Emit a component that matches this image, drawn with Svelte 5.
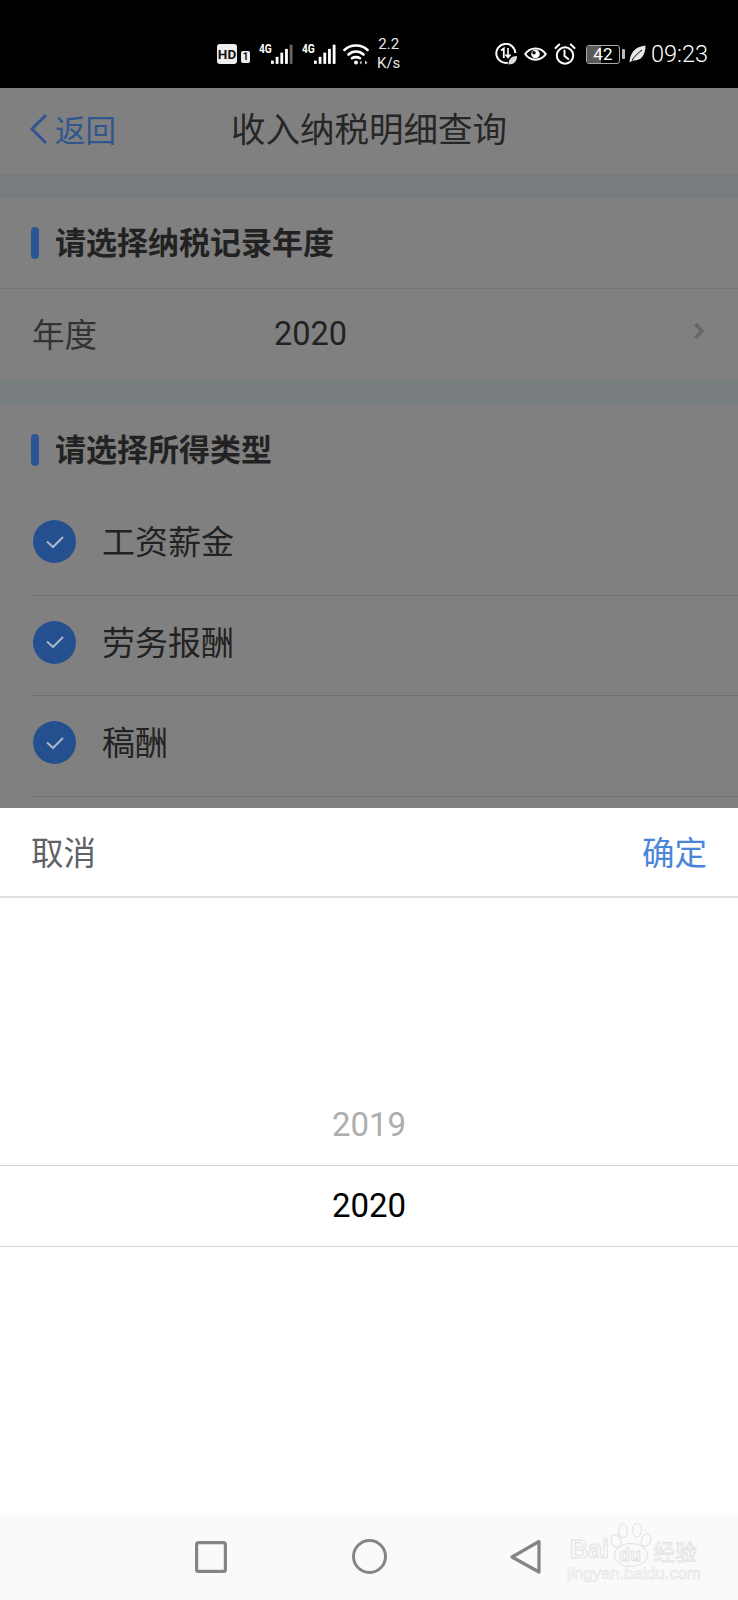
<script>
  const types = ['工资薪金', '劳务报酬', '稿酬'];
</script>

<div class="screen">
  <header class="status">
    <span class="hd">HD</span>
    <span class="sim">1</span>
    <span class="net">
      <span class="g4">4G</span>
      <svg width="22" height="21" viewBox="0 0 23.500 21"><g fill="#fff"><rect x="0" y="17" width="3" height="3.500"/><rect x="5" y="13" width="3" height="7.500"/><rect x="10" y="8.500" width="3" height="12"/><rect x="15" y="4.500" width="3" height="16"/></g><rect x="20" y="0" width="3" height="20.500" fill="#666"/></svg>
    </span>
    <span class="net">
      <span class="g4">4G</span>
      <svg width="22" height="21" viewBox="0 0 23.500 21"><g fill="#fff"><rect x="0" y="17" width="3" height="3.500"/><rect x="5" y="13" width="3" height="7.500"/><rect x="10" y="8.500" width="3" height="12"/><rect x="15" y="4.500" width="3" height="16"/><rect x="20" y="0" width="3" height="20.500"/></g></svg>
    </span>
    <svg class="wifi" width="26" height="22" viewBox="0 0 26 22" fill="none" stroke="#fff" stroke-width="2.600" stroke-linecap="round"><path d="M1.500 7C7.500 1 18.500 1 24.500 7"/><path d="M5.500 11.500C9.500 7.500 16.500 7.500 20.500 11.500"/><path d="M9 15.200C11 13.800 15 13.800 17 15.200"/><circle cx="13" cy="19.500" r="2" fill="#fff" stroke="none"/><path d="M18.500 17.500l-2 2.300 2 1.800zM22 17.500l2.500 2.300-2.500 1.800z" fill="#ddd" stroke="none"/></svg>
    <span class="speed"><span>2.2</span><span>K/s</span></span>

    <span class="right">
      <svg class="onecall" width="22" height="22" viewBox="0 0 22 22" fill="none" stroke="#fff" stroke-width="2"><path d="M13 19.600A9.500 9.500 0 1 1 20.300 10"/><path d="M6 7.500l2.800-2V15" stroke-width="1.800"/><path d="M13 5v9.500M10.500 11.500l2.500 3 2.500-3" stroke-width="1.600"/><path d="M13.500 21.500c0-5.500 3-8.500 8.500-8.500 0 5.500-3 8.500-8.500 8.500z" fill="#ddd" stroke="none"/></svg>
      <svg class="eye" width="23" height="18" viewBox="0 0 23 17" fill="none" stroke="#fff" stroke-width="2"><path d="M1.200 8.500C6 1 17 1 21.800 8.500C17 16 6 16 1.200 8.500z"/><circle cx="11.500" cy="8.500" r="4.300" fill="#fff" stroke="none"/><circle cx="10" cy="7.300" r="1.700" fill="#000" stroke="none"/></svg>
      <svg class="alarm" width="22" height="22" viewBox="0 0 22 22" fill="none" stroke="#fff" stroke-width="2"><circle cx="11" cy="12.500" r="8.200"/><path d="M10.500 7.500v5.500l3.800 3M1.500 5L5.200 1.500M20.500 5L16.800 1.500" stroke-linecap="round"/></svg>
      <span class="battery"><span class="level"></span><span class="pct">42</span></span>
      <span class="nub"></span>
      <svg class="leaf" width="17" height="18" viewBox="0 0 17 18"><path d="M.5 17.500C1 8 6 1.500 16.500.5C16.500 11 11 16.500 3.500 15.500C2.500 16 1.500 17 .5 17.500z" fill="#e8e8e8"/><path d="M3 15C6 11 9 8 13 5" stroke="#000" stroke-width="1" fill="none"/></svg>
      <span class="time">09:23</span>
    </span>
  </header>

  <div class="page">
    <nav class="topbar">
      <span class="back">
        <svg width="20" height="32" viewBox="0 0 20 32" fill="none" stroke="#31568f" stroke-width="3"><path d="M17 2L3 16l14 14"/></svg>
        <span>返回</span>
      </span>
      <h1>收入纳税明细查询</h1>
    </nav>
    <div class="band"></div>
    <section>
      <h2 class="head"><i></i>请选择纳税记录年度</h2>
      <div class="year">
        <span class="label">年度</span>
        <span class="value">2020</span>
        <svg class="more" width="12" height="18" viewBox="0 0 12 18" fill="none" stroke="#666" stroke-width="3.600"><path d="M2.500 2l6.500 7-6.500 7"/></svg>
      </div>
    </section>
    <div class="band second"></div>
    <section>
      <h2 class="head"><i></i>请选择所得类型</h2>
      {#each types as t}
        <div class="check">
          <span class="tick">
            <svg width="20" height="14" viewBox="0 0 20 14" fill="none" stroke="#a9b6c8" stroke-width="2"><path d="M2 6.500l6 5.500L18 2"/></svg>
          </span>
          <span class="txt">{t}</span>
        </div>
      {/each}
    </section>
  </div>

  <div class="sheet">
    <div class="actions">
      <span class="cancel">取消</span>
      <span class="ok">确定</span>
    </div>
    <div class="wheel">
      <div class="opt">2019</div>
      <div class="opt current">2020</div>
    </div>
  </div>

  <footer class="sysnav">
    <svg class="sq" width="32" height="32" viewBox="0 0 32 32" fill="none" stroke="#858585" stroke-width="3.200"><rect x="1.600" y="1.600" width="28.800" height="28.800" rx="2"/></svg>
    <svg class="ci" width="35" height="35" viewBox="0 0 35 35" fill="none" stroke="#858585" stroke-width="3"><circle cx="17.500" cy="17.500" r="16"/></svg>
    <svg class="tr" width="31" height="35" viewBox="0 0 31 35" fill="none" stroke="#858585" stroke-width="3.200" stroke-linejoin="round"><path d="M29 2.500L2 18l27 15z"/></svg>
    <div class="mark">
      <svg class="paw" width="46" height="48" viewBox="0 0 46 48" fill="#fafafa" stroke="#e4e4e4" stroke-width="1.200"><ellipse cx="8" cy="22" rx="4.500" ry="6.500" transform="rotate(-25 8 22)"/><ellipse cx="15" cy="12" rx="4.500" ry="7"/><ellipse cx="29" cy="11" rx="4.500" ry="7"/><ellipse cx="38" cy="21" rx="4.500" ry="6.500" transform="rotate(25 38 21)"/><ellipse cx="23" cy="36" rx="16.500" ry="11.500"/></svg>
      <span class="bai">Bai</span>
      <span class="du">du</span>
      <span class="jy">经验</span>
      <span class="url">jingyan.baidu.com</span>
    </div>
  </footer>
</div>

<style>
  :global(body) { margin: 0; background: #fff; }
  .screen {
    width: 738px;
    height: 1600px;
    display: flex;
    flex-direction: column;
    overflow: hidden;
    font-family: "Noto Sans CJK SC", "Noto Sans", sans-serif;
  }

  /* status bar */
  .status {
    height: 88px;
    flex: none;
    background: #000;
    color: #fff;
    display: flex;
    align-items: center;
    padding: 20px 30px 0 217px;
    box-sizing: border-box;
    font-family: Roboto, sans-serif;
  }
  .hd {
    width: 20px; height: 20px;
    background: #eee;
    color: #111;
    border-radius: 3px;
    font: 700 13.500px/20px Roboto, sans-serif;
    text-align: center;
  }
  .sim {
    width: 9px; height: 12px;
    background: #eee;
    color: #111;
    border-radius: 2px;
    font: 700 10px/12px Roboto, sans-serif;
    text-align: center;
    margin: 6px 0 0 4px;
  }
  .net { display: flex; align-items: flex-end; height: 21px; margin-left: 9px; }
  .g4 { font: 700 12px/11px Roboto, sans-serif; align-self: flex-start; width: 12px; transform: scaleX(.85); transform-origin: left; }
  .wifi { margin-left: 7px; }
  .speed {
    display: flex; flex-direction: column; align-items: center;
    font: 400 15px/19px Roboto, sans-serif;
    margin-left: 8px;
    color: #e8e8e8;
  }
  .right { display: flex; align-items: center; margin-left: auto; }
  .eye { margin-left: 7px; }
  .alarm { margin-left: 7px; margin-top: -1px; }
  .battery {
    position: relative;
    width: 34px; height: 19px;
    box-sizing: border-box;
    border: 1.500px solid #aaa;
    border-radius: 3px;
    margin-left: 10px;
    overflow: hidden;
  }
  .level { position: absolute; left: 0; top: 0; bottom: 0; width: 44%; background: #5a5a5a; }
  .pct { position: absolute; inset: 0; text-align: center; font: 400 17px/16px Roboto, sans-serif; }
  .nub { width: 3px; height: 10px; background: #bbb; margin-left: 2px; border-radius: 1px; }
  .leaf { margin-left: 4px; }
  .time { font: 300 23.500px/28px Roboto, sans-serif; margin-left: 5px; }

  /* dimmed page */
  .page {
    height: 720px;
    flex: none;
    overflow: hidden;
    background: #808080;
    color: #222;
  }
  .topbar {
    position: relative;
    height: 87px;
    box-sizing: border-box;
    display: flex;
    align-items: center;
    justify-content: center;
    border-bottom: 1px solid #777a7b;
  }
  .back {
    position: absolute;
    left: 29px; top: 25px;
    display: flex;
    align-items: center;
    gap: 6px;
    color: #31568f;
    font-size: 30.500px;
    line-height: 32px;
  }
  .back svg { display: block; }
  h1 {
    margin: -8px 0 0;
    font-size: 34.500px;
    font-weight: 400;
    line-height: 44px;
    color: #262626;
  }
  .band { height: 23px; background: #777c7e; }
  .band.second { height: 24px; }
  .head {
    margin: 0;
    height: 90px;
    display: flex;
    align-items: center;
    gap: 16px;
    padding: 0 0 4px 31px;
    box-sizing: border-box;
    font-size: 31px;
    line-height: 44px;
    font-weight: 700;
    color: #222;
  }
  .head i {
    width: 8px; height: 32px;
    border-radius: 4px;
    background: #2c5597;
    margin-top: 4px;
  }
  .year {
    height: 93px;
    display: flex;
    align-items: center;
    border-top: 1px solid #757575;
    box-sizing: border-box;
    padding: 0 33px 2px 32px;
  }
  .label { font-size: 32.500px; line-height: 44px; color: #333; width: 242px; margin-bottom: 2px; }
  .value { font: 400 32.500px/40px Roboto, sans-serif; color: #222; }
  .more { margin-left: auto; margin-top: -6px; }
  .check {
    height: 100.500px;
    box-sizing: border-box;
    margin-left: 31px;
    border-bottom: 1px solid #707070;
    display: flex;
    align-items: center;
    padding: 0 0 6px 2px;
    font-size: 33px;
    line-height: 44px;
    color: #222;
  }
  .txt { margin-bottom: 3px; }
  .tick {
    width: 43px; height: 43px;
    border-radius: 50%;
    background: #24508f;
    display: flex;
    align-items: center;
    justify-content: center;
    margin-right: 26px;
    flex: none;
  }

  /* bottom sheet */
  .sheet {
    flex: 1;
    background: #fff;
    min-height: 0;
  }
  .actions {
    height: 90px;
    box-sizing: border-box;
    display: flex;
    align-items: center;
    justify-content: space-between;
    padding: 0 31px 3px 31px;
    border-bottom: 2px solid #e2e2e2;
    font-size: 32.500px;
    line-height: 44px;
  }
  .cancel { color: #5f6368; }
  .ok { color: #4a86d8; }
  .wheel {
    padding-top: 187px;
    font: 400 33px/80px Roboto, sans-serif;
    text-align: center;
  }
  .opt { height: 80px; color: #aeaeae; box-sizing: border-box; }
  .opt.current {
    height: 82px;
    line-height: 79px;
    color: #000;
    border-top: 1.500px solid #d2d2d2;
    border-bottom: 1.500px solid #d8d8d8;
  }

  /* system nav */
  .sysnav {
    height: 87px;
    flex: none;
    background: #fafafa;
    position: relative;
    display: flex;
    align-items: center;
    padding-left: 195px;
    box-sizing: border-box;
  }
  .ci { margin-left: 125px; }
  .tr { margin-left: 123px; }
  .mark {
    position: absolute;
    left: 567px; top: 0;
    width: 140px; height: 80px;
    color: transparent;
    font-family: "Liberation Sans", sans-serif;
  }
  .paw { position: absolute; left: 41px; top: 6px; }
  .bai, .du, .jy, .url { position: absolute; white-space: nowrap; }
  .bai {
    left: 3px; top: 21px;
    font-size: 25px; line-height: 30px; font-weight: 700;
    -webkit-text-stroke: 1px #e2e2e2;
  }
  .du {
    left: 52px; top: 30px;
    font-size: 18px; line-height: 24px; font-weight: 700;
    -webkit-text-stroke: 1px #e2e2e2;
  }
  .jy {
    left: 86px; top: 22px;
    font-family: "Noto Sans CJK SC", sans-serif;
    font-size: 22px; line-height: 30px;
    -webkit-text-stroke: .8px #e2e2e2;
  }
  .url {
    left: 0; top: 52px;
    font-size: 16.600px; line-height: 18px;
    -webkit-text-stroke: .7px #e6e6e6;
  }
</style>
